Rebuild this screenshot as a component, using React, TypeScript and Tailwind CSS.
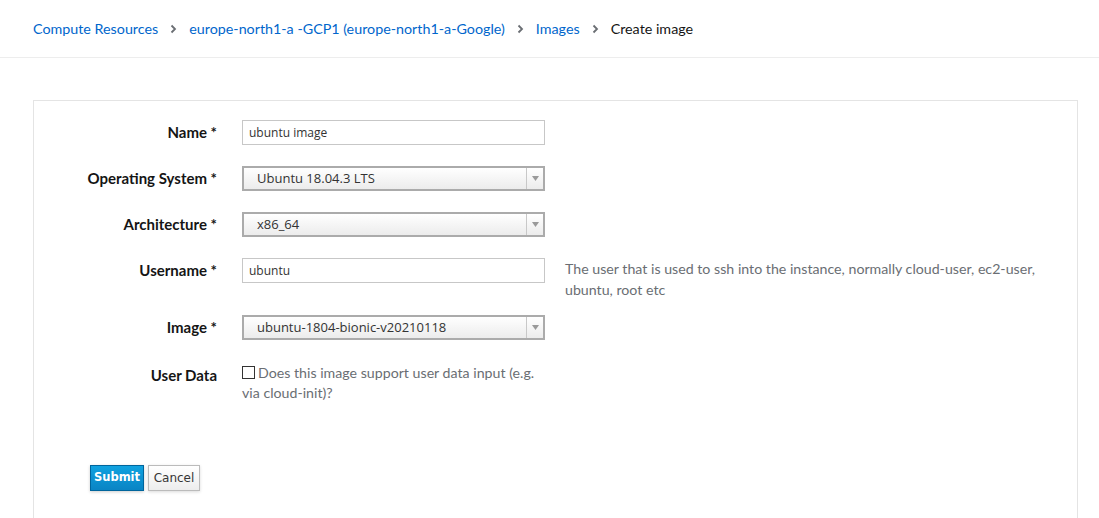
import React from "react";

const Crumb = ({ children }: { children: React.ReactNode }) => (
    <a href="#" className="text-[#0066cc] hover:underline">{children}</a>
)

const Chevron = () => (
    <svg width="7" height="10" viewBox="0 0 7 10" className="mx-[12px] shrink-0">
        <path d="M1.5 1.5 L5 5 L1.5 8.5" fill="none" stroke="#6a6e73" strokeWidth="1.8" />
    </svg>
)

function FieldLabel({ children }: { children: React.ReactNode }) {
    return (
        <div className="w-[183px] shrink-0 text-right font-bold text-[15px] text-[#151515] leading-[25px]">
            {children}
        </div>
    )
}

function TextField({ value }: { value: string }) {
    return (
        <input
            type="text"
            defaultValue={value}
            className="w-[303px] h-[25px] px-[6px] border border-[#c7c7c7] bg-white text-[12px] text-[#333] outline-none"
            style={{ fontFamily: "'Open Sans', sans-serif" }}
        />
    )
}

function SelectField({ value }: { value: string }) {
    return (
        <div className="flex w-[303px] h-[25px] border-2 border-[#ababab] bg-gradient-to-b from-white to-[#ececec]" style={{ fontFamily: "'Open Sans', sans-serif" }}>
            <div className="flex-1 pl-[13px] text-[13px] leading-[21px] text-[#333]">{value}</div>
            <div className="w-[17px] border-l border-[#c8c8c8] flex items-center justify-center">
                <svg width="7" height="5" viewBox="0 0 7 5">
                    <path d="M0 0 H7 L3.5 5 Z" fill="#9a9a9a" />
                </svg>
            </div>
        </div>
    )
}

export default function App() {
    return (
        <div className="min-h-screen bg-white" style={{ fontFamily: "Lato, 'Noto Sans', sans-serif" }}>
            {/* breadcrumb */}
            <div className="h-[58px] border-b border-[#ededed] flex items-center pl-[33px] text-[14.3px]">
                <Crumb>Compute Resources</Crumb>
                <Chevron />
                <Crumb>europe-north1-a -GCP1 (europe-north1-a-Google)</Crumb>
                <Chevron />
                <Crumb>Images</Crumb>
                <Chevron />
                <span className="text-[#151515]">Create image</span>
            </div>

            <div className="pt-[42px] pl-[33px] pr-[21px]">
                <div className="border border-[#e4e4e4] pt-[19px] pb-[40px]">
                    <div className="flex items-start gap-[25px] mb-[21px]">
                        <FieldLabel>Name *</FieldLabel>
                        <TextField value="ubuntu image" />
                    </div>
                    <div className="flex items-start gap-[25px] mb-[21px]">
                        <FieldLabel>Operating System *</FieldLabel>
                        <SelectField value="Ubuntu 18.04.3 LTS" />
                    </div>
                    <div className="flex items-start gap-[25px] mb-[21px]">
                        <FieldLabel>Architecture *</FieldLabel>
                        <SelectField value="x86_64" />
                    </div>
                    <div className="flex items-start gap-[25px] mb-[15px]">
                        <FieldLabel>Username *</FieldLabel>
                        <TextField value="ubuntu" />
                        <p className="ml-[-5px] w-[480px] text-[14.2px] leading-[21px] text-[#6a6e73]">
                            The user that is used to ssh into the instance, normally cloud-user, ec2-user, ubuntu, root etc
                        </p>
                    </div>
                    <div className="flex items-start gap-[25px] mb-[23px]">
                        <FieldLabel>Image *</FieldLabel>
                        <SelectField value="ubuntu-1804-bionic-v20210118" />
                    </div>
                    <div className="flex items-start gap-[25px]">
                        <FieldLabel>User Data</FieldLabel>
                        <label className="w-[303px] text-[14.2px] leading-[20px] text-[#6a6e73]">
                            <input type="checkbox" className="appearance-none w-[13px] h-[13px] border border-[#333] bg-white align-[-1px] mr-[3px]" />
                            Does this image support user data input (e.g. via cloud-init)?
                        </label>
                    </div>

                    <div className="flex gap-[4px] ml-[56px] mt-[62px]" style={{ fontFamily: "'DejaVu Sans', Verdana, sans-serif" }}>
                        <button className="w-[54px] h-[26px] text-[11.5px] font-bold text-white border border-[#00659c] bg-gradient-to-b from-[#10a2e0] to-[#0a84c4] shadow-[0_1px_3px_rgba(0,0,0,0.2)]">
                            Submit
                        </button>
                        <button className="w-[52px] h-[26px] text-[12px] text-[#363636] border border-[#bbbbbb] bg-gradient-to-b from-white to-[#ededed] shadow-[0_1px_3px_rgba(0,0,0,0.15)]">
                            Cancel
                        </button>
                    </div>
                </div>
            </div>
        </div>
    )
}
